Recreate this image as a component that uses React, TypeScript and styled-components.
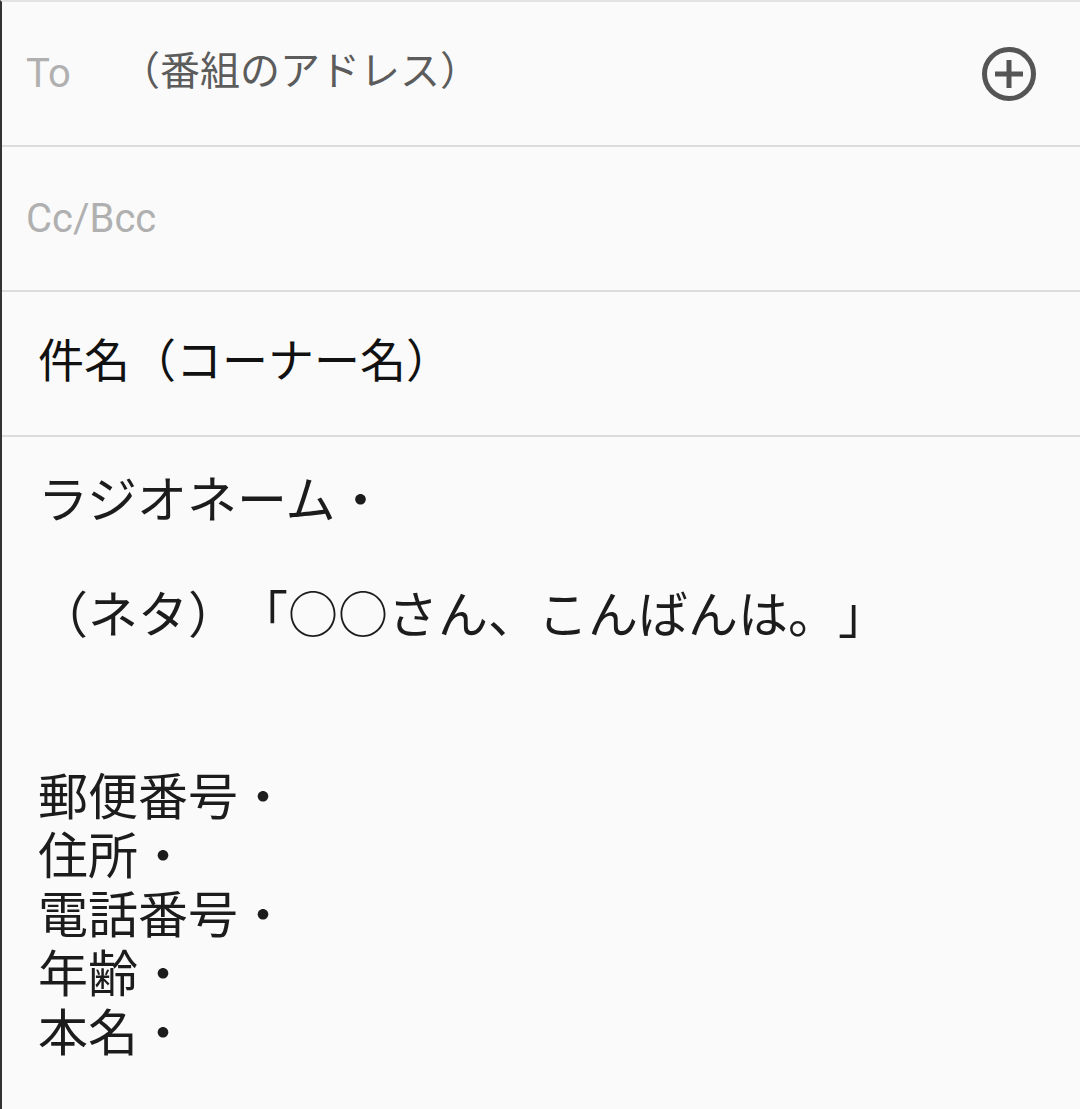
import React from "react"
import styled, { createGlobalStyle } from "styled-components"

const GlobalStyle = createGlobalStyle`
  html, body {
    margin: 0;
    padding: 0;
    background: #fafafa;
  }
  body {
    font-family: Roboto, "Noto Sans CJK JP", sans-serif;
    text-spacing-trim: space-all;
  }
`

const Screen = styled.div`
  width: 1080px;
  height: 1109px;
  box-sizing: border-box;
  background: #fafafa;
  border-left: 2px solid #333;
  border-top: 2px solid #e2e2e2;
  overflow: hidden;
`

const FieldRow = styled.div`
  height: 143px;
  display: flex;
  align-items: center;
  border-bottom: 2px solid #dcdcdc;
  padding: 0 42px 0 24px;
`

const FieldLabel = styled.span<{ $width?: number }>`
  font-family: Roboto, sans-serif;
  font-size: 40px;
  color: #b0b0b0;
  width: ${({ $width }) => ($width ? `${$width}px` : "auto")};
`

const Recipient = styled.span`
  flex: 1;
  font-family: "Noto Sans CJK JP", sans-serif;
  font-size: 40px;
  color: #5c5c5c;
  margin-bottom: 12px;
`

const AddButton = styled.button`
  width: 58px;
  height: 58px;
  padding: 0;
  border: none;
  background: none;
  display: flex;
  align-items: center;
  justify-content: center;
`

const Subject = styled.div`
  font-family: "Noto Sans CJK JP", sans-serif;
  font-size: 46px;
  color: #111;
  padding-left: 12px;
  margin-bottom: 14px;
`

const Body = styled.div`
  padding: 30px 0 0 36px;
  font-family: "Noto Sans CJK JP", sans-serif;
  font-size: 50px;
  color: #1c1c1c;
  text-spacing-trim: space-all;
`

const Line = styled.div<{ $gap?: number }>`
  line-height: 59px;
  height: 59px;
  white-space: pre;
  margin-top: ${({ $gap }) => $gap ?? 0}px;
`

const PlusCircle = () => (
  <svg width="58" height="58" viewBox="0 0 58 58">
    <circle cx="29" cy="29" r="24.5" fill="none" stroke="#555" strokeWidth="5" />
    <path d="M29 15v28M15 29h28" stroke="#555" strokeWidth="5" />
  </svg>
)

const contactLines = ["郵便番号・", "住所・", "電話番号・", "年齢・", "本名・"]

export default function App() {
  return (
    <>
      <GlobalStyle />
      <Screen>
        <FieldRow>
          <FieldLabel $width={94}>To</FieldLabel>
          <Recipient>（番組のアドレス）</Recipient>
          <AddButton aria-label="add recipient">
            <PlusCircle />
          </AddButton>
        </FieldRow>
        <FieldRow>
          <FieldLabel>Cc/Bcc</FieldLabel>
        </FieldRow>
        <FieldRow>
          <Subject>件名（コーナー名）</Subject>
        </FieldRow>
        <Body>
          <Line>ラジオネーム・</Line>
          <Line $gap={56}>（ネタ）「○○さん、こんばんは。」</Line>
          <Line $gap={123}>{contactLines[0]}</Line>
          {contactLines.slice(1).map((t) => (
            <Line key={t}>{t}</Line>
          ))}
        </Body>
      </Screen>
    </>
  )
}
